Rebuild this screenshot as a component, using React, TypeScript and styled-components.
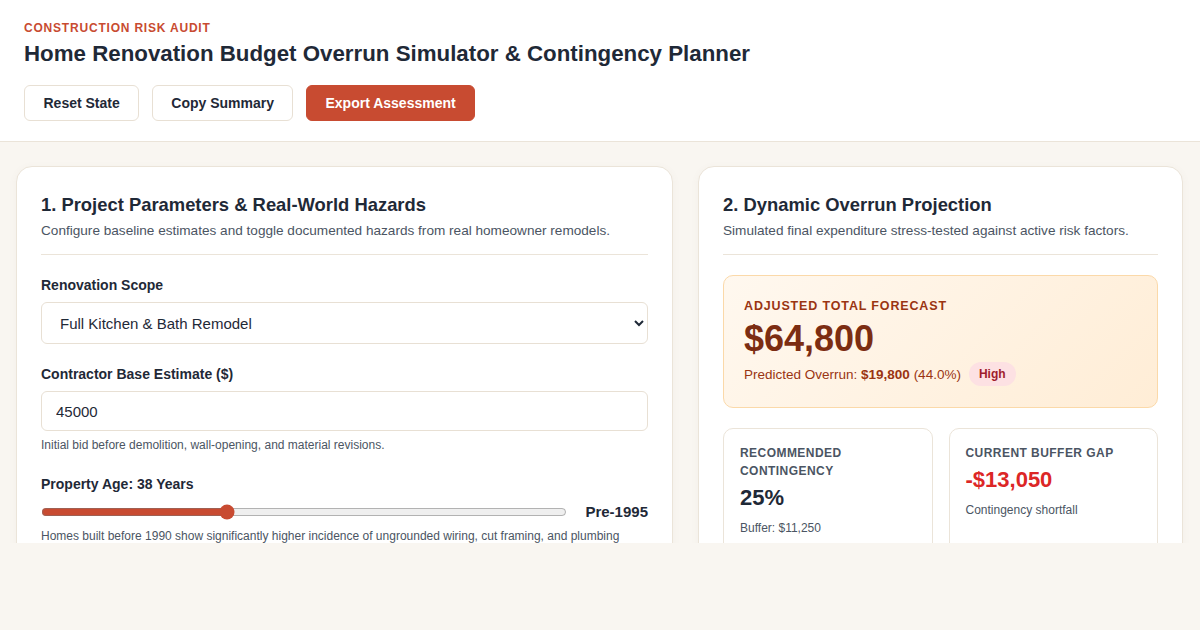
import React, { useState } from "react";
import styled, { createGlobalStyle } from "styled-components";

const GlobalStyle = createGlobalStyle`
  * { box-sizing: border-box; }
  html, body {
    margin: 0;
    padding: 0;
    background: #f9f6f1;
    font-family: "Liberation Sans", Arial, sans-serif;
    color: #1f2937;
  }
`;

const Header = styled.header`
  background: #fff;
  border-bottom: 1px solid #ebe4d9;
  padding: 20px 24px 20px;
`;

const Eyebrow = styled.div`
  font-size: 12px;
  font-weight: 700;
  letter-spacing: 0.8px;
  color: #c84b31;
  text-transform: uppercase;
  line-height: 16px;
`;

const PageTitle = styled.h1`
  margin: 3px 0 16px;
  font-size: 22.3px;
  line-height: 30px;
  font-weight: 700;
  color: #1f2937;
`;

const Actions = styled.div`
  display: flex;
  gap: 12.5px;
`;

const ActionButton = styled.button<{ $primary?: boolean }>`
  height: 36px;
  padding: 0 18.5px;
  border-radius: 6px;
  font-family: inherit;
  font-size: 14px;
  font-weight: 700;
  cursor: pointer;
  border: 1px solid ${(p) => (p.$primary ? "#c84b31" : "#e8e0d4")};
  background: ${(p) => (p.$primary ? "#c84b31" : "#fff")};
  color: ${(p) => (p.$primary ? "#fff" : "#1f2937")};
`;

const Main = styled.main`
  height: 401px;
  overflow: hidden;
  padding: 24px 17px 0 16px;
  display: grid;
  grid-template-columns: 657px 1fr;
  gap: 25px;
  align-items: start;
`;

const Card = styled.section`
  background: #fff;
  border: 1px solid #ebe4d9;
  border-radius: 16px;
  padding: 26px 24px 24px;
  box-shadow: 0 2px 8px rgba(120, 100, 70, 0.05);
`;

const CardTitle = styled.h2`
  margin: 0;
  font-size: 18.4px;
  line-height: 24px;
  font-weight: 700;
  color: #1f2937;
`;

const CardSub = styled.p`
  margin: 4px 0 0;
  font-size: 13.6px;
  line-height: 20px;
  color: #4b5563;
  padding-bottom: 13px;
  border-bottom: 1px solid #ebe4d9;
`;

const Field = styled.div`
  margin-top: 21px;
`;

const Label = styled.label`
  display: block;
  font-size: 14px;
  font-weight: 700;
  line-height: 18px;
  margin-bottom: 8px;
  color: #1f2937;
`;

const Select = styled.select`
  width: 100%;
  height: 42px;
  padding: 0 12px 0 14px;
  font-family: inherit;
  font-size: 15px;
  color: #1f2937;
  border: 1px solid #e8e0d4;
  border-radius: 6px;
  background: #fff;
`;

const Input = styled.input`
  width: 100%;
  height: 40px;
  padding: 0 14px;
  font-family: inherit;
  font-size: 15px;
  color: #1f2937;
  border: 1px solid #e8e0d4;
  border-radius: 6px;
  outline: none;
`;

const Help = styled.div`
  margin-top: 6px;
  font-size: 12px;
  line-height: 17px;
  color: #4b5563;
`;

const SliderRow = styled.div`
  display: flex;
  align-items: center;
  gap: 18px;
  padding: 2px 0 2px;
`;

const Range = styled.input`
  flex: 1;
  margin: 0;
  accent-color: #c84b31;
  height: 16px;
`;

const RangeValue = styled.span`
  font-size: 15px;
  font-weight: 700;
  color: #1f2937;
`;

const Forecast = styled.div`
  margin-top: 20px;
  border: 1px solid #fbd9a9;
  border-radius: 10px;
  background: linear-gradient(135deg, #fff8ef 0%, #ffedd6 100%);
  padding: 22px 20px 21px;
`;

const ForecastLabel = styled.div`
  font-size: 12.5px;
  font-weight: 700;
  letter-spacing: 0.85px;
  text-transform: uppercase;
  color: #9a3412;
  line-height: 16px;
`;

const ForecastValue = styled.div`
  font-size: 36px;
  font-weight: 700;
  line-height: 44px;
  color: #7c2d12;
  margin-top: 3px;
`;

const OverrunLine = styled.div`
  display: flex;
  align-items: center;
  gap: 8px;
  margin-top: 1px;
  font-size: 13.5px;
  color: #9a3412;
  strong { font-weight: 700; }
`;

const Badge = styled.span`
  background: #fde1e3;
  color: #9f1d2d;
  font-size: 12px;
  font-weight: 700;
  border-radius: 12px;
  padding: 5px 10px;
`;

const Stats = styled.div`
  display: grid;
  grid-template-columns: 1fr 1fr;
  gap: 16px;
  margin-top: 20px;
`;

const Stat = styled.div`
  border: 1px solid #ebe4d9;
  border-radius: 10px;
  padding: 15px 16px 16px;
  min-height: 130px;
`;

const StatLabel = styled.div`
  font-size: 12px;
  font-weight: 700;
  letter-spacing: 0.45px;
  line-height: 18px;
  text-transform: uppercase;
  color: #4b5563;
`;

const StatValue = styled.div<{ $negative?: boolean }>`
  margin-top: 4px;
  font-size: 22px;
  font-weight: 700;
  line-height: 28px;
  color: ${(p) => (p.$negative ? "#dc2626" : "#1f2937")};
`;

const StatNote = styled.div`
  margin-top: 8px;
  font-size: 12px;
  line-height: 16px;
  color: #4b5563;
`;

export default function App() {
  const [age, setAge] = useState(38);
  const [base, setBase] = useState("45000");

  return (
    <>
      <GlobalStyle />
      <Header>
        <Eyebrow>Construction Risk Audit</Eyebrow>
        <PageTitle>Home Renovation Budget Overrun Simulator &amp; Contingency Planner</PageTitle>
        <Actions>
          <ActionButton>Reset State</ActionButton>
          <ActionButton>Copy Summary</ActionButton>
          <ActionButton $primary>Export Assessment</ActionButton>
        </Actions>
      </Header>

      <Main>
        <Card>
          <CardTitle>1. Project Parameters &amp; Real-World Hazards</CardTitle>
          <CardSub>Configure baseline estimates and toggle documented hazards from real homeowner remodels.</CardSub>

          <Field>
            <Label>Renovation Scope</Label>
            <Select defaultValue="full">
              <option value="full">Full Kitchen &amp; Bath Remodel</option>
              <option value="kitchen">Kitchen Only</option>
              <option value="bath">Bathroom Only</option>
            </Select>
          </Field>

          <Field>
            <Label>Contractor Base Estimate ($)</Label>
            <Input value={base} onChange={(e) => setBase(e.target.value)} />
            <Help>Initial bid before demolition, wall-opening, and material revisions.</Help>
          </Field>

          <Field>
            <Label>Property Age: {age} Years</Label>
            <SliderRow>
              <Range
                type="range"
                min={1}
                max={107}
                value={age}
                onChange={(e) => setAge(Number(e.target.value))}
              />
              <RangeValue>Pre-1995</RangeValue>
            </SliderRow>
            <Help>
              Homes built before 1990 show significantly higher incidence of ungrounded wiring, cut framing, and plumbing
              degradation hidden behind walls.
            </Help>
          </Field>
        </Card>

        <Card>
          <CardTitle>2. Dynamic Overrun Projection</CardTitle>
          <CardSub>Simulated final expenditure stress-tested against active risk factors.</CardSub>

          <Forecast>
            <ForecastLabel>Adjusted Total Forecast</ForecastLabel>
            <ForecastValue>$64,800</ForecastValue>
            <OverrunLine>
              <span>
                Predicted Overrun: <strong>$19,800</strong> (44.0%)
              </span>
              <Badge>High</Badge>
            </OverrunLine>
          </Forecast>

          <Stats>
            <Stat>
              <StatLabel>Recommended Contingency</StatLabel>
              <StatValue>25%</StatValue>
              <StatNote>Buffer: $11,250</StatNote>
            </Stat>
            <Stat>
              <StatLabel>Current Buffer Gap</StatLabel>
              <StatValue $negative>-$13,050</StatValue>
              <StatNote>Contingency shortfall</StatNote>
            </Stat>
          </Stats>
        </Card>
      </Main>
    </>
  );
}
